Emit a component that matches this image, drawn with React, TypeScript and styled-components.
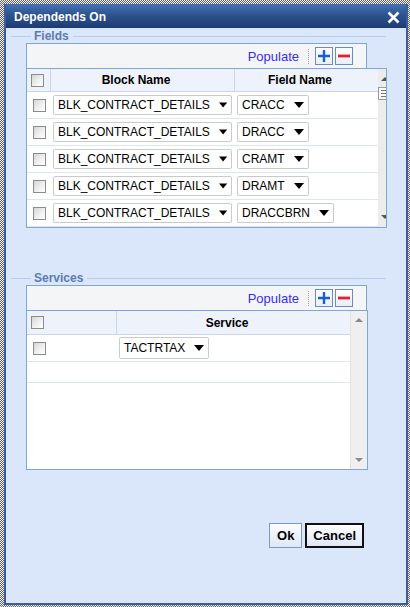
import React from "react";
import styled, { createGlobalStyle } from "styled-components";

const GlobalStyle = createGlobalStyle`
  html, body {
    margin: 0;
    padding: 0;
  }
  body {
    font-family: "Liberation Sans", Arial, sans-serif;
    background: repeating-conic-gradient(#6a6a6a 0% 25%, #ececec 0% 50%) 0 0 / 2px 2px;
  }
`;

const fieldRows = [
  ["BLK_CONTRACT_DETAILS", "CRACC"],
  ["BLK_CONTRACT_DETAILS", "DRACC"],
  ["BLK_CONTRACT_DETAILS", "CRAMT"],
  ["BLK_CONTRACT_DETAILS", "DRAMT"],
  ["BLK_CONTRACT_DETAILS", "DRACCBRN"],
];

const Arrow = () => (
  <svg width="10" height="6" viewBox="0 0 10 6">
    <path d="M0 0 H10 L5 6 Z" fill="#000" />
  </svg>
);

const CloseIcon = () => (
  <svg width="13" height="13" viewBox="0 0 13 13">
    <path d="M1.5 1.5 L11.5 11.5 M11.5 1.5 L1.5 11.5" stroke="#fff" strokeWidth="2.6" />
  </svg>
);

const PlusIcon = () => (
  <svg width="12" height="12" viewBox="0 0 12 12">
    <path d="M6 0 V12 M0 6 H12" stroke="#1a5ed6" strokeWidth="2.4" />
  </svg>
);

const MinusIcon = () => (
  <svg width="12" height="12" viewBox="0 0 12 12">
    <path d="M0 6 H12" stroke="#e3202c" strokeWidth="2.8" />
  </svg>
);

const SmallTri = ({ up, color }: { up?: boolean; color: string }) => (
  <svg width="8" height="4" viewBox="0 0 8 4">
    <path d={up ? "M0 4 L4 0 L8 4 Z" : "M0 0 H8 L4 4 Z"} fill={color} />
  </svg>
);

const App: React.FC = () => {
  return (
    <>
      <GlobalStyle />
      <Page>
        <Dialog>
          <TitleBar>
            <Title>Dependends On</Title>
            <CloseButton>
              <CloseIcon />
            </CloseButton>
          </TitleBar>
          <Body>
            <Legend>Fields</Legend>
            <Panel>
              <Toolbar>
                <PopulateLink>Populate</PopulateLink>
                <ToolSep />
                <IconBox>
                  <PlusIcon />
                </IconBox>
                <IconBox>
                  <MinusIcon />
                </IconBox>
              </Toolbar>
              <Table $width={361}>
                <TableMain>
                  <HeaderRow $cols="24px 184px 1fr">
                    <HeaderCell>
                      <CheckBox />
                    </HeaderCell>
                    <HeaderCell>Block Name</HeaderCell>
                    <HeaderCell $last>Field Name</HeaderCell>
                  </HeaderRow>
                  <RowsArea>
                    {fieldRows.map(([block, field], i) => (
                      <Row key={i} $cols="24px 184px 1fr" $height={27}>
                        <Cell $center>
                          <CheckBox />
                        </Cell>
                        <Cell>
                          <Dropdown $width={179}>
                            <span>{block}</span>
                            <Arrow />
                          </Dropdown>
                        </Cell>
                        <Cell>
                          <Dropdown>
                            <span>{field}</span>
                            <Arrow />
                          </Dropdown>
                        </Cell>
                      </Row>
                    ))}
                  </RowsArea>
                </TableMain>
                <NarrowScroll>
                  <SmallTri up color="#555" />
                  <Thumb>
                    <i />
                    <i />
                    <i />
                  </Thumb>
                  <ScrollSpacer />
                  <SmallTri color="#555" />
                </NarrowScroll>
              </Table>
            </Panel>

            <Legend $gap={43}>Services</Legend>
            <Panel>
              <Toolbar>
                <PopulateLink>Populate</PopulateLink>
                <ToolSep />
                <IconBox>
                  <PlusIcon />
                </IconBox>
                <IconBox>
                  <MinusIcon />
                </IconBox>
              </Toolbar>
              <Table $width={342}>
                <TableMain>
                  <HeaderRow $cols="90px 1fr">
                    <HeaderCell>
                      <CheckBox />
                    </HeaderCell>
                    <HeaderCell $last>Service</HeaderCell>
                  </HeaderRow>
                  <RowsArea>
                    <Row $cols="90px 1fr" $height={27}>
                      <Cell $center>
                        <CheckBox />
                      </Cell>
                      <Cell>
                        <Dropdown $height={22}>
                          <span>TACTRTAX</span>
                          <Arrow />
                        </Dropdown>
                      </Cell>
                    </Row>
                    <Row $cols="90px 1fr" $height={21}>
                      <Cell />
                      <Cell />
                    </Row>
                  </RowsArea>
                </TableMain>
                <WideScroll>
                  <SmallTri up color="#8a8a8a" />
                  <SmallTri color="#8a8a8a" />
                </WideScroll>
              </Table>
            </Panel>

            <Footer>
              <Button>Ok</Button>
              <Button $focused>Cancel</Button>
            </Footer>
          </Body>
        </Dialog>
      </Page>
    </>
  );
};

export default App;

const Page = styled.div`
  box-sizing: border-box;
  height: 607px;
  padding: 4px 2px 2px 4px;
`;

const Dialog = styled.div`
  box-sizing: border-box;
  height: 100%;
  border: 2px solid #3a5d9c;
  background: #dae7fb;
  display: flex;
  flex-direction: column;
`;

const TitleBar = styled.div`
  height: 22px;
  margin-top: -2px;
  padding: 2px 0 0 8px;
  display: flex;
  align-items: center;
  justify-content: space-between;
  background: linear-gradient(#4571b4 0%, #2d548f 45%, #1c3a75 100%);
`;

const Title = styled.div`
  color: #fff;
  font-size: 12px;
  font-weight: bold;
`;

const CloseButton = styled.div`
  width: 13px;
  height: 13px;
  margin-right: 6px;
  display: flex;
`;

const Body = styled.div`
  flex: 1;
  padding: 1px 20px 0 5px;
  display: flex;
  flex-direction: column;
`;

const Legend = styled.div<{ $gap?: number }>`
  height: 14px;
  margin-top: ${(p) => p.$gap ?? 0}px;
  display: flex;
  align-items: center;
  color: #5a7cb2;
  font-size: 12px;
  font-weight: bold;
  &::before {
    content: "";
    width: 20px;
    margin-right: 3px;
    border-top: 1px solid #b7cdee;
  }
  &::after {
    content: "";
    flex: 1;
    margin-left: 4px;
    border-top: 1px solid #b7cdee;
  }
`;

const Panel = styled.div`
  margin-left: 15px;
  display: flex;
  flex-direction: column;
`;

const Toolbar = styled.div`
  box-sizing: border-box;
  width: 341px;
  height: 25px;
  border: 1px solid #7ea6da;
  border-bottom: none;
  background: #f4f5f7;
  display: flex;
  align-items: center;
  justify-content: flex-end;
  padding-right: 13px;
`;

const PopulateLink = styled.a`
  color: #3a2cf5;
  font-size: 13px;
  cursor: pointer;
`;

const ToolSep = styled.span`
  height: 15px;
  margin: 0 4px 0 9px;
  border-left: 1px dotted #a0a0a0;
`;

const IconBox = styled.span`
  box-sizing: border-box;
  width: 18px;
  height: 18px;
  margin-left: 2px;
  border: 1px solid #6d8db6;
  background: linear-gradient(#ffffff, #e9eef6);
  display: flex;
  align-items: center;
  justify-content: center;
`;

const Table = styled.div<{ $width: number }>`
  box-sizing: border-box;
  width: ${(p) => p.$width}px;
  height: 160px;
  border: 1px solid #7ea6da;
  background: #fff;
  display: flex;
`;

const TableMain = styled.div`
  flex: 1;
  display: flex;
  flex-direction: column;
`;

const HeaderRow = styled.div<{ $cols: string }>`
  height: 23px;
  display: grid;
  grid-template-columns: ${(p) => p.$cols};
  background: #edf2fb;
  border-bottom: 1px solid #c8d7ee;
`;

const HeaderCell = styled.div<{ $last?: boolean }>`
  display: flex;
  align-items: center;
  justify-content: center;
  padding-right: 13px;
  font-size: 12px;
  font-weight: bold;
  color: #000;
  border-right: ${(p) => (p.$last ? "none" : "1px solid #c8d7ee")};
  &:first-child {
    justify-content: flex-start;
    padding: 0 0 0 4px;
  }
`;

const RowsArea = styled.div`
  flex: 1;
  display: flex;
  flex-direction: column;
`;

const Row = styled.div<{ $cols: string; $height: number }>`
  box-sizing: border-box;
  height: ${(p) => p.$height}px;
  display: grid;
  grid-template-columns: ${(p) => p.$cols};
  border-bottom: 1px solid #dbe5f5;
`;

const Cell = styled.div<{ $center?: boolean }>`
  display: flex;
  align-items: center;
  padding-left: ${(p) => (p.$center ? "6px" : "2px")};
`;

const CheckBox = styled.span`
  box-sizing: border-box;
  width: 13px;
  height: 13px;
  border: 1px solid #8c8c8c;
  background: linear-gradient(135deg, #d6d6d6 0%, #f2f2f2 60%, #ffffff 100%);
  display: inline-block;
`;

const Dropdown = styled.div<{ $width?: number; $height?: number }>`
  box-sizing: border-box;
  ${(p) => (p.$width ? `width: ${p.$width}px;` : "")}
  height: ${(p) => p.$height ?? 20}px;
  padding: 0 4px 0 4px;
  display: inline-flex;
  align-items: center;
  justify-content: space-between;
  gap: 9px;
  border: 1px solid #cacaca;
  border-radius: 2px;
  background: #fff;
  font-size: 12px;
  color: #000;
  white-space: nowrap;
`;

const NarrowScroll = styled.div`
  width: 8px;
  background: #ececec;
  display: flex;
  flex-direction: column;
  align-items: flex-start;
  padding: 8px 0 8px;
  overflow: hidden;
  svg {
    margin-left: 3px;
  }
`;

const Thumb = styled.div`
  box-sizing: border-box;
  width: 10px;
  height: 13px;
  margin-top: 6px;
  border: 1px solid #9a9a9a;
  border-right: none;
  background: #fafafa;
  display: flex;
  flex-direction: column;
  justify-content: center;
  gap: 2px;
  padding-left: 2px;
  i {
    display: block;
    width: 6px;
    border-top: 1px solid #777;
  }
`;

const ScrollSpacer = styled.div`
  flex: 1;
`;

const WideScroll = styled.div`
  width: 16px;
  background: #efefef;
  border-left: 1px solid #e2e2e2;
  display: flex;
  flex-direction: column;
  align-items: center;
  justify-content: space-between;
  padding: 7px 0 7px;
`;

const Footer = styled.div`
  margin-top: 53px;
  padding-right: 22px;
  display: flex;
  justify-content: flex-end;
  gap: 3px;
`;

const Button = styled.button<{ $focused?: boolean }>`
  box-sizing: border-box;
  height: 25px;
  padding: 0 ${(p) => (p.$focused ? "6px" : "7px")};
  border: ${(p) => (p.$focused ? "2px solid #111" : "1px solid #7b9bc4")};
  border-radius: 0;
  background: linear-gradient(#fcfdff, #dfe7f6);
  font-family: "Liberation Sans", Arial, sans-serif;
  font-size: 13px;
  font-weight: bold;
  color: #000;
  cursor: pointer;
`;
